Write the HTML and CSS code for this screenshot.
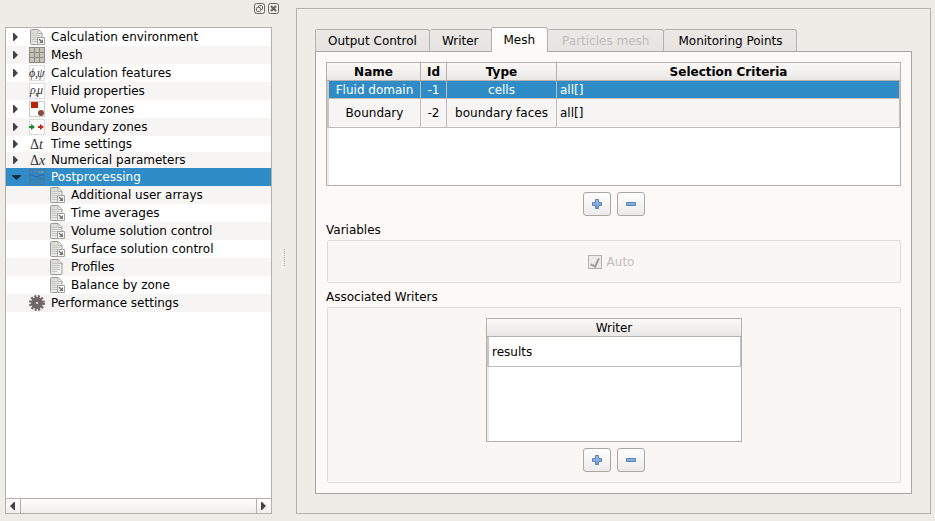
FILE: index.html
```html
<!DOCTYPE html>
<html lang="en">
<head>
<meta charset="utf-8">
<title>Postprocessing</title>
<link rel="stylesheet" href="styles.css">
</head>
<body>
<svg class="sprites" aria-hidden="true">
  <defs>
    <linearGradient id="paper" x1="0" y1="0" x2="1" y2="1">
      <stop offset="0" stop-color="#d4d4d0"/><stop offset="1" stop-color="#fafafa"/>
    </linearGradient>
    <linearGradient id="blue" x1="0" y1="0" x2="0" y2="1">
      <stop offset="0" stop-color="#a4c0e2"/><stop offset="1" stop-color="#6f9bd0"/>
    </linearGradient>
  </defs>
  <symbol id="page" viewBox="0 0 16 16">
    <path d="M1.500 1.500q0-1 1-1h6.500l4 4v10q0 1-1 1h-9.500q-1 0-1-1z" fill="url(#paper)" stroke="#999994"/>
    <path d="M9 .5v4h4z" fill="#fff" stroke="#b0b0ac"/>
    <path d="M3 4.500h5M3 6.500h8M3 8.500h8M3 10.500h8M3 12.500h5" stroke="#c6c6c2"/>
  </symbol>
  <symbol id="pagelink" viewBox="0 0 16 16">
    <use href="#page"/>
    <path d="M8.500 8.500h7v7h-7z" fill="#f8f8f8" stroke="#a3a39f"/>
    <path d="M10 10l3 3" stroke="#777" stroke-width="1.500"/>
    <path d="M14 10v4h-4z" fill="#777"/>
  </symbol>
  <symbol id="grid" viewBox="0 0 16 16">
    <path d="M0 0h16v16H0z" fill="#c5c3b8"/>
    <path d="M.5 0v16M5.500 0v16M10.500 0v16M15.500 0v16M0 .5h16M0 5.500h16M0 10.500h16M0 15.500h16" stroke="#8d8b83"/>
  </symbol>
  <symbol id="plus" viewBox="0 0 12 12">
    <path d="M4.500 1.500h3v3h3v3h-3v3h-3v-3h-3v-3h3z" fill="url(#blue)" stroke="#5583bd" stroke-linejoin="round"/>
  </symbol>
  <symbol id="minus" viewBox="0 0 12 12">
    <path d="M1.500 4.500h9v3h-9z" fill="url(#blue)" stroke="#5583bd" stroke-linejoin="round"/>
  </symbol>
  <symbol id="right" viewBox="0 0 8 10"><path d="M1 1h1l4 4-4 4H1z" fill="#444"/></symbol>
  <symbol id="left" viewBox="0 0 8 10"><path d="M6 1H5L1 5l4 4h1z" fill="#444"/></symbol>
  <symbol id="down" viewBox="0 0 10 8"><path d="M1 2h9v1L5.500 7 1 3z" fill="#132d42"/></symbol>
</svg>

<aside class="dock">
  <div class="dock-bar">
    <button aria-label="Float panel"><svg viewBox="0 0 11 11"><rect x=".5" y=".5" width="10" height="10" rx="2"/><rect x="4.500" y="2.500" width="4" height="4" rx="1"/><rect x="2.500" y="4.500" width="4" height="4" rx="1" fill="#efebe7"/></svg></button>
    <button aria-label="Close panel"><svg viewBox="0 0 11 11"><rect x=".5" y=".5" width="10" height="10" rx="2"/><path d="M3 3l5 5M8 3L3 8" stroke-width="2"/></svg></button>
  </div>
  <div class="tree-box">
    <ul class="tree">
      <li><button class="toggle" aria-label="Expand"><svg><use href="#right"/></svg></button><svg class="icon"><use href="#pagelink"/></svg><a href="#">Calculation environment</a></li>
      <li><button class="toggle" aria-label="Expand"><svg><use href="#right"/></svg></button><svg class="icon"><use href="#grid"/></svg><a href="#">Mesh</a></li>
      <li><button class="toggle" aria-label="Expand"><svg><use href="#right"/></svg></button><svg class="icon math" viewBox="0 0 16 16"><rect x=".5" y=".5" width="15" height="15"/><text x="0" y="12">ϕ</text><text x="6" y="12">,</text><text x="8" y="12">ψ</text></svg><a href="#">Calculation features</a></li>
      <li><span class="toggle"></span><svg class="icon math" viewBox="0 0 16 16"><rect x=".5" y=".5" width="15" height="15"/><text x="1" y="11">ρ</text><text x="6" y="11">,</text><text x="8" y="11">μ</text></svg><a href="#">Fluid properties</a></li>
      <li><button class="toggle" aria-label="Expand"><svg><use href="#right"/></svg></button><svg class="icon" viewBox="0 0 16 16"><rect x=".5" y=".5" width="15" height="15" fill="#fff" stroke="#c9c9c9"/><path d="M2 1h7v6H2z" fill="#b92500"/><circle cx="12" cy="12" r="3" fill="#8b4a40"/></svg><a href="#">Volume zones</a></li>
      <li><button class="toggle" aria-label="Expand"><svg><use href="#right"/></svg></button><svg class="icon" viewBox="0 0 16 16"><rect x=".5" y=".5" width="15" height="15" fill="#fff" stroke="#ccc" stroke-dasharray="2 1"/><path d="M0 7h2V5l4 3-4 3V9H0z" fill="#16892a"/><path d="M9 7h2V5l4 3-4 3V9H9z" fill="#c32b10"/></svg><a href="#">Boundary zones</a></li>
      <li class="short"><button class="toggle" aria-label="Expand"><svg><use href="#right"/></svg></button><svg class="icon math delta" viewBox="0 0 16 16"><text x="1" y="13"><tspan class="upright">Δ</tspan>t</text></svg><a href="#">Time settings</a></li>
      <li class="short"><button class="toggle" aria-label="Expand"><svg><use href="#right"/></svg></button><svg class="icon math delta" viewBox="0 0 16 16"><text x="1" y="13"><tspan class="upright">Δ</tspan>x</text></svg><a href="#">Numerical parameters</a></li>
      <li class="selected"><button class="toggle" aria-label="Collapse"><svg class="open"><use href="#down"/></svg></button><svg class="icon" viewBox="0 0 16 16"><rect x=".5" y=".5" width="15" height="15" fill="#3787bd" stroke="#467c9f"/><path d="M10 3h5" stroke="#6c8fa8" stroke-width="2"/><path d="M1 6q2-1 4 1t5 0 5-1" fill="none" stroke="#2463c6"/><path d="M1 12l3-2 3 2 3-3 2 1 3-1" fill="none" stroke="#2c7997"/></svg><a href="#">Postprocessing</a></li>
      <li class="child"><svg class="icon"><use href="#pagelink"/></svg><a href="#">Additional user arrays</a></li>
      <li class="child"><svg class="icon"><use href="#pagelink"/></svg><a href="#">Time averages</a></li>
      <li class="child"><svg class="icon"><use href="#pagelink"/></svg><a href="#">Volume solution control</a></li>
      <li class="child"><svg class="icon"><use href="#pagelink"/></svg><a href="#">Surface solution control</a></li>
      <li class="child"><svg class="icon"><use href="#page"/></svg><a href="#">Profiles</a></li>
      <li class="child"><svg class="icon"><use href="#pagelink"/></svg><a href="#">Balance by zone</a></li>
      <li><span class="toggle"></span><svg class="icon" viewBox="0 0 16 16"><circle cx="8" cy="8" r="6.500" fill="none" stroke="#716765" stroke-width="3" stroke-dasharray="2 1.403"/><circle cx="8" cy="8" r="3.500" fill="none" stroke="#716765" stroke-width="5"/></svg><a href="#">Performance settings</a></li>
    </ul>
    <div class="scrollbar">
      <button aria-label="Scroll left"><svg><use href="#left"/></svg></button>
      <span class="thumb"></span>
      <button aria-label="Scroll right"><svg><use href="#right"/></svg></button>
    </div>
  </div>
</aside>

<div class="splitter"><i></i></div>

<main class="frame">
  <div class="tabs" role="tablist">
    <button role="tab">Output Control</button>
    <button role="tab">Writer</button>
    <button role="tab" class="active" aria-selected="true">Mesh</button>
    <button role="tab" class="wide" disabled>Particles mesh</button>
    <button role="tab" class="wide">Monitoring Points</button>
  </div>
  <section class="pane">
    <div class="table-box meshes">
      <table>
        <colgroup><col class="c-name"><col class="c-id"><col class="c-type"><col></colgroup>
        <thead><tr><th>Name</th><th>Id</th><th>Type</th><th>Selection Criteria</th></tr></thead>
        <tbody>
          <tr class="current"><td>Fluid domain</td><td>-1</td><td>cells</td><td>all[]</td></tr>
          <tr><td>Boundary</td><td>-2</td><td>boundary faces</td><td>all[]</td></tr>
        </tbody>
      </table>
    </div>
    <div class="buttons">
      <button aria-label="Add mesh"><svg><use href="#plus"/></svg></button>
      <button aria-label="Remove mesh"><svg><use href="#minus"/></svg></button>
    </div>
    <h2>Variables</h2>
    <div class="group variables">
      <input type="checkbox" id="auto" checked disabled><label for="auto">Auto</label>
    </div>
    <h2>Associated Writers</h2>
    <div class="group writers">
      <div class="table-box">
        <table>
          <thead><tr><th>Writer</th></tr></thead>
          <tbody><tr><td>results</td></tr></tbody>
        </table>
      </div>
      <div class="buttons">
        <button aria-label="Add writer"><svg><use href="#plus"/></svg></button>
        <button aria-label="Remove writer"><svg><use href="#minus"/></svg></button>
      </div>
    </div>
  </section>
</main>
</body>
</html>
```
FILE: styles.css
```css
* { box-sizing: border-box; }

body {
  margin: 0;
  min-height: 100vh;
  padding: 0 4px 7px 5px;
  display: flex;
  background: #efebe7;
  color: #000;
  font: 12px/16px "DejaVu Sans", sans-serif;
}

button {
  margin: 0;
  padding: 0;
  border: 0;
  background: none;
  color: inherit;
  font: inherit;
}

svg { display: block; flex: none; }
.sprites { position: absolute; width: 0; height: 0; }

/* Navigation dock */
.dock {
  flex: 0 0 267px;
  display: flex;
  flex-direction: column;
}

.dock-bar {
  height: 27px;
  padding: 3px 0 0;
  display: flex;
  justify-content: flex-end;
  gap: 3px;
  margin-right: -7px;
}

.dock-bar svg { width: 11px; height: 11px; fill: none; stroke: #66645f; }
.dock-bar button { height: 11px; }

.tree-box {
  flex: 1;
  display: flex;
  flex-direction: column;
  border: 1px solid #b4b0ac;
  background: #fff;
}

.tree { flex: 1; margin: 0; padding: 0; list-style: none; }
.tree li { display: flex; align-items: center; height: 18px; padding-left: 5px; }
.tree li:nth-child(even) { background: #f6f5f4; }
.tree li.short { height: 16px; }
.tree li.child { padding-left: 43px; }
.tree li.selected { background: #308cc6; color: #fff; }
.tree a { color: inherit; text-decoration: none; white-space: nowrap; }
.toggle { width: 18px; flex: none; }
.toggle svg { width: 8px; height: 10px; margin-left: 1px; }
.toggle svg.open { width: 10px; height: 8px; margin-left: 0; }
.icon { width: 16px; height: 16px; margin-right: 6px; }

.math { overflow: visible; }
.math text { font: italic 12px "Liberation Serif", serif; fill: #333; }
.math rect { fill: #fff; stroke: #ddd; }
.math.delta text { font-size: 14px; }
.math .upright { font-style: normal; }

.scrollbar {
  display: flex;
  height: 15px;
  border-top: 1px solid #b4b0ac;
  background: linear-gradient(#fefefe, #f0edea);
}

.scrollbar button { width: 14px; display: grid; place-items: center; }
.scrollbar svg { width: 8px; height: 10px; }
.thumb { flex: 1; border: solid #b4b0ac; border-width: 0 1px; }

.splitter { flex: 0 0 24px; display: grid; place-items: center; }
.splitter i { height: 17px; border-left: 1px dotted #b4b0ac; }

/* Settings frame */
.frame {
  flex: 1;
  min-width: 0;
  margin-top: 8px;
  padding: 18px 18px 19px;
  display: flex;
  flex-direction: column;
  border: 1px solid #b4b0ac;
}

.tabs { display: flex; align-items: flex-end; height: 24px; }

.tabs button {
  height: 22px;
  padding: 0 12px;
  border: 1px solid #b4b0ac;
  border-left-width: 0;
  border-bottom: 0;
  border-radius: 2px 3px 0 0;
  background: linear-gradient(#ebe8e6, #e6e3e1);
  white-space: nowrap;
}

.tabs button:first-child { border-left-width: 1px; }
.tabs button:disabled { color: #bebebe; }
.tabs .wide { padding: 0 14px; }

.tabs .active {
  z-index: 1;
  height: 25px;
  margin: 0 0 -1px -1px;
  border-left-width: 1px;
  background: linear-gradient(#fff, #fdf9f6);
}

.pane {
  flex: 1;
  display: flex;
  flex-direction: column;
  padding: 10px;
  border: 1px solid #a9a6a3;
  background: #fdf9f6;
}

.table-box { border: 1px solid #b4b0ac; background: linear-gradient(90deg, #efebe7 2px, #fff 2px); }
.meshes { height: 124px; }

table { width: 100%; border-collapse: separate; border-spacing: 0; table-layout: fixed; }
.c-name { width: 94px; }
.c-id { width: 26px; }
.c-type { width: 110px; }

th {
  height: 18px;
  padding: 0;
  border: solid #b4b0ac;
  border-width: 0 1px 1px 0;
  background: linear-gradient(#fcf9f7, #e9e7e5);
}

th:last-child { border-right: 0; }

td {
  height: 29px;
  padding: 0 3px;
  border: solid #bfbcb9;
  border-width: 0 1px 1px 0;
  background: #f6f5f4;
  text-align: center;
  white-space: nowrap;
}

td:first-child { border-left: 2px solid #c9c5c1; }
td:last-child { text-align: left; }
.current td { height: 18px; background: #308cc6; color: #fff; }

.buttons { display: flex; justify-content: center; gap: 6px; margin-top: 6px; }

.buttons button {
  width: 28px;
  height: 24px;
  display: grid;
  place-items: center;
  border: 1px solid #aaa7a4;
  border-radius: 3px;
  background: linear-gradient(#fff, #eceae8);
}

.buttons svg { width: 12px; height: 12px; }

h2 { margin: 6px 0 2px; font: inherit; }

.group {
  margin-left: 1px;
  border: 1px solid #e0dcd9;
  border-radius: 2px;
  background: #faf6f3;
}

.variables {
  height: 43px;
  padding-right: 6px;
  display: flex;
  align-items: center;
  justify-content: center;
  gap: 5px;
  color: #bebebe;
}

#auto {
  appearance: none;
  width: 14px;
  height: 14px;
  margin: 0;
  display: grid;
  place-items: center;
  border: 1px solid #b4b0ac;
  background: #efebe7;
}

#auto::after {
  content: "";
  width: 4px;
  height: 8px;
  border: solid #999;
  border-width: 0 2px 2px 0;
  transform: rotate(25deg);
}

.writers { flex: 1; padding: 10px; }
.writers .table-box { width: 256px; height: 124px; margin: 0 auto; }
.writers th { font-weight: normal; }
.writers td { height: 30px; background: #fff; }
```
